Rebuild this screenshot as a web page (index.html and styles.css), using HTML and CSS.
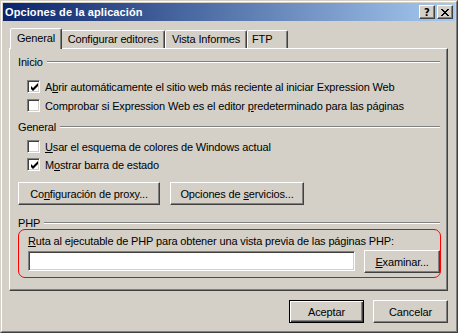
FILE: index.html
```html
<!DOCTYPE html>
<html lang="es">
<head>
    <meta charset="UTF-8">
    <title>Opciones de la aplicación</title>
    <link rel="stylesheet" href="styles.css">
</head>
<body>
    <div class="window">
        <div class="frame">
            <div class="titlebar">
                <span class="title">Opciones de la aplicación</span>
                <div class="caption-btns">
                    <button class="cap-btn">?</button>
                    <button class="cap-btn cap-close">
                        <svg width="8" height="7" viewBox="0 0 8 7"><path d="M0 0h2v1h1v1h2V1h1V0h2v1H7v1H6v1H5v1h1v1h1v1h1v1H6V6H5V5H3v1H2v1H0V6h1V5h1V4h1V3H2V2H1V1H0z" fill="#000"/></svg>
                    </button>
                </div>
            </div>

            <div class="body">
                <div class="tabs">
                    <div class="tab active">General</div>
                    <div class="tab tab-editors">Configurar editores</div>
                    <div class="tab tab-reports">Vista Informes</div>
                    <div class="tab tab-ftp">FTP</div>
                </div>

                <div class="panel">
                    <div class="group-title"><span>Inicio</span><div class="rule"></div></div>
                    <label class="check check-1"><span class="box checked"></span><span>A<u>b</u>rir automáticamente el sitio web más reciente al iniciar Expression Web</span></label>
                    <label class="check check-2"><span class="box"></span><span>Comprobar si Expression Web es el editor <u>p</u>redeterminado para las páginas</span></label>

                    <div class="group-title second"><span>General</span><div class="rule"></div></div>
                    <label class="check check-3"><span class="box"></span><span><u>U</u>sar el esquema de colores de Windows actual</span></label>
                    <label class="check check-4"><span class="box checked"></span><span>M<u>o</u>strar barra de estado</span></label>

                    <div class="btn-row">
                        <button class="btn btn-proxy">Co<u>n</u>figuración de proxy...</button>
                        <button class="btn btn-services">Opciones de <u>s</u>ervicios...</button>
                    </div>

                    <div class="group-title php"><span>PHP</span><div class="rule"></div></div>
                    <div class="highlight">
                        <div class="php-label"><u>R</u>uta al ejecutable de PHP para obtener una vista previa de las páginas PHP:</div>
                        <div class="php-row">
                            <input class="field" type="text">
                            <button class="btn btn-browse"><u>E</u>xaminar...</button>
                        </div>
                    </div>
                </div>

                <div class="footer">
                    <button class="btn btn-default">Aceptar</button>
                    <button class="btn">Cancelar</button>
                </div>
            </div>
        </div>
    </div>
</body>
</html>
```

FILE: styles.css
```css
body {
    margin: 0;
    padding: 0;
    font-family: Tahoma, "Liberation Sans", Arial, sans-serif;
    font-size: 11px;
    letter-spacing: -0.15px;
    color: #000;
    background-color: #d4d0c8;
}
.window {
    width: 458px;
    height: 333px;
    box-sizing: border-box;
    border: 1px solid;
    border-color: #d4d0c8 #404040 #404040 #d4d0c8;
    background-color: #d4d0c8;
}
.frame {
    height: 100%;
    box-sizing: border-box;
    border: 1px solid;
    border-color: #fff #808080 #808080 #fff;
    padding: 1px;
}
.titlebar {
    height: 18px;
    display: flex;
    align-items: center;
    justify-content: space-between;
    padding: 0 2px 0 2px;
    background: linear-gradient(to right, #0a246a, #a6caf0);
}
.title {
    color: #fff;
    font-weight: bold;
    font-size: 11px;
    letter-spacing: 0.1px;
}
.caption-btns {
    display: flex;
    gap: 2px;
}
.cap-btn {
    width: 16px;
    height: 14px;
    padding: 0;
    margin: 0;
    box-sizing: border-box;
    border: 1px solid;
    border-color: #fff #404040 #404040 #fff;
    box-shadow: inset -1px -1px #808080;
    background-color: #d4d0c8;
    font-family: "DejaVu Sans", sans-serif;
    font-weight: bold;
    font-size: 10px;
    line-height: 11px;
    display: flex;
    align-items: center;
    justify-content: center;
}
.cap-close svg {
    display: block;
}
.body {
    padding: 7px 7px 0 6px;
}
.tabs {
    display: flex;
    height: 20px;
    align-items: flex-end;
    padding-left: 1px;
    position: relative;
    z-index: 1;
}
.tab {
    height: 18px;
    box-sizing: border-box;
    padding-top: 2px;
    text-align: center;
    border: 1px solid;
    border-bottom: none;
    border-color: #fff #404040 transparent #fff;
    box-shadow: inset -1px 0 #808080;
    border-radius: 2px 2px 0 0;
    background-color: #d4d0c8;
}
.tab.active {
    width: 52px;
    height: 21px;
    margin-bottom: -1px;
    padding-top: 3px;
    margin-right: -1px;
    position: relative;
    z-index: 2;
}
.tab-editors {
    width: 104px;
}
.tab-reports {
    width: 82px;
}
.tab-ftp {
    width: 41px;
    text-align: left;
    padding-left: 4px;
}
.panel {
    height: 243px;
    box-sizing: border-box;
    border: 1px solid;
    border-color: #fff #404040 #404040 #fff;
    box-shadow: inset -1px -1px #808080;
    padding: 6px 6px 0 8px;
}
.group-title {
    display: flex;
    align-items: center;
    height: 13px;
    gap: 4px;
}
.group-title.second {
    margin-top: 8px;
}
.group-title.php {
    margin-top: 11px;
}
.rule {
    flex: 1;
    height: 0;
    margin-right: 1px;
    border-top: 1px solid #808080;
    border-bottom: 1px solid #fff;
}
.check {
    display: flex;
    align-items: center;
    height: 13px;
    padding-left: 9px;
    white-space: nowrap;
}
.check-1 {
    margin-top: 12px;
}
.check-2 {
    margin-top: 6px;
}
.check-3 {
    margin-top: 7px;
}
.check-4 {
    margin-top: 5px;
}
.box {
    width: 13px;
    height: 13px;
    box-sizing: border-box;
    border: 1px solid;
    border-color: #808080 #fff #fff #808080;
    box-shadow: inset 1px 1px #404040, inset -1px -1px #d4d0c8;
    background-color: #fff;
    margin-right: 5px;
    flex-shrink: 0;
}
.box.checked {
    background-image: url("data:image/svg+xml;utf8,<svg xmlns='http://www.w3.org/2000/svg' width='13' height='13'><path d='M3 5v3l2 2 5-5V2L5 7z' fill='black'/></svg>");
}
.btn-row {
    display: flex;
    gap: 10px;
    margin-top: 11px;
}
.btn {
    height: 23px;
    box-sizing: border-box;
    border: 1px solid;
    border-color: #fff #404040 #404040 #fff;
    box-shadow: inset -1px -1px #808080;
    background-color: #d4d0c8;
    font-family: inherit;
    font-size: 11px;
    letter-spacing: inherit;
    color: #000;
    padding: 0 6px;
    margin: 0;
}
.btn-proxy {
    width: 142px;
}
.btn-services {
    width: 134px;
}
.highlight {
    height: 49px;
    box-sizing: border-box;
    border: 1px solid #ff0000;
    border-radius: 7px;
    padding: 5px 0 0 9px;
}
.php-label {
    height: 13px;
    white-space: nowrap;
}
.php-row {
    display: flex;
    align-items: flex-start;
    gap: 9px;
    margin-top: 2px;
}
.field {
    width: 328px;
    height: 20px;
    margin-top: 1px;
    box-sizing: border-box;
    border: 1px solid;
    border-color: #808080 #fff #fff #808080;
    box-shadow: inset 1px 1px #404040, inset -1px -1px #d4d0c8;
    background-color: #fff;
    padding: 0;
}
.btn-browse {
    width: 76px;
    height: 23px;
}
.footer {
    display: flex;
    justify-content: flex-end;
    gap: 9px;
    margin-top: 9px;
}
.footer .btn {
    width: 75px;
    height: 23px;
}
.btn-default {
    border: 1px solid #000;
    box-shadow: inset 1px 1px #fff, inset -1px -1px #404040, inset -2px -2px #808080;
}
```
